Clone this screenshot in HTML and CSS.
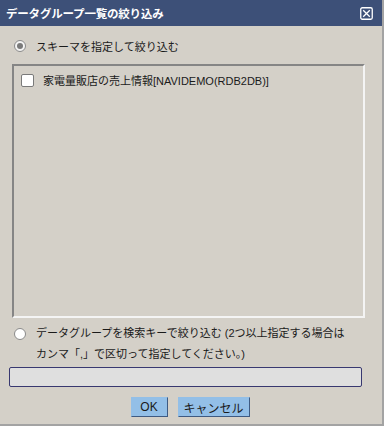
FILE: index.html
```html
<!DOCTYPE html>
<html lang="ja">
<head>
<meta charset="utf-8">
<link rel="stylesheet" href="styles.css">
</head>
<body>
<div class="dialog">
  <div class="titlebar">
    <span class="title">データグループ一覧の絞り込み</span>
    <svg class="close" width="13" height="13" viewBox="0 0 13 13">
      <rect x="0.75" y="0.75" width="11.5" height="11.5" rx="1.5" fill="none" stroke="#fff" stroke-width="1.3"/>
      <path d="M3.2 3.2 L9.8 9.8 M9.8 3.2 L3.2 9.8" stroke="#fff" stroke-width="1.3"/>
    </svg>
  </div>
  <div class="body">
    <label class="opt opt1"><span class="radio checked"></span><span>スキーマを指定して絞り込む</span></label>
    <div class="listbox">
      <label class="item"><span class="check"></span><span class="itemtext">家電量販店の売上情報[NAVIDEMO(RDB2DB)]</span></label>
    </div>
    <label class="opt opt2"><span class="radio"></span><span class="multi">データグループを検索キーで絞り込む (2つ以上指定する場合は<br>カンマ「,」で区切って指定してください。)</span></label>
    <div class="input"></div>
    <div class="buttons">
      <button class="btn ok">OK</button>
      <button class="btn cancel">キャンセル</button>
    </div>
  </div>
</div>
</body>
</html>
```
FILE: styles.css
```css
* { box-sizing: border-box; }
html, body { margin: 0; padding: 0; }
body {
  width: 384px; height: 426px;
  font-family: "Liberation Sans", "Noto Sans CJK JP", sans-serif;
  font-size: 11px;
  color: #1a1a1a;
  background: #d4d0c8;
}
.dialog {
  width: 384px; height: 426px;
  background: #d4d0c8;
  border-right: 2px solid #a3a3a3;
  border-bottom: 2px solid #a3a3a3;
  display: flex; flex-direction: column;
}
.titlebar {
  height: 26px; flex: none;
  background: #3d5078;
  display: flex; align-items: center; justify-content: space-between;
  padding: 0 9px 0 6px;
  color: #fff;
}
.title { font-weight: bold; font-size: 11.5px; letter-spacing: -0.2px; }
.close { display: block; }
.body {
  flex: 1;
  display: flex; flex-direction: column;
  padding: 8px 0 0 0;
}
.opt { display: flex; align-items: flex-start; gap: 10px; }
.opt1 { padding-left: 14px; height: 24px; align-items: center; }
.radio {
  width: 12px; height: 12px; border-radius: 50%;
  background: #fff; border: 1px solid #8a8a8a;
  flex: none; position: relative;
}
.radio.checked { background: #f4f4f4; }
.radio.checked::after {
  content: ""; position: absolute; left: 2px; top: 2px;
  width: 6px; height: 6px; border-radius: 50%; background: #7a7a7a;
}
.listbox {
  flex: none;
  margin: 6px 17px 0 12px;
  height: 254px;
  border-top: 2px solid #858585;
  border-left: 2px solid #858585;
  border-right: 2px solid #f4f4f4;
  border-bottom: 2px solid #f4f4f4;
  padding: 6px 0 0 7px;
}
.item { display: flex; align-items: center; gap: 9px; }
.check {
  width: 13px; height: 13px; border-radius: 2px;
  background: #fff; border: 1px solid #7a7a7a; flex: none;
}
.opt2 { padding-left: 14px; margin-top: 9px; }
.opt2 .radio { margin-top: 1px; }
.multi { line-height: 21px; margin-top: -4px; }
.input {
  flex: none;
  margin: 2px 20px 0 9px;
  height: 20px;
  background: #dfdfdf;
  border: 1px solid #383870;
  border-radius: 2px;
}
.buttons { display: flex; justify-content: center; gap: 10px; margin-top: 10px; padding-right: 2px; }
.btn {
  font-family: "Liberation Sans", "Noto Sans CJK JP", sans-serif;
  font-size: 12px; color: #1a1a1a;
  background: #93bfe7;
  border: 1px solid #93bfe7;
  border-right-color: #3e5a82;
  border-bottom-color: #3e5a82;
  height: 20px; padding: 0; margin: 0;
  white-space: nowrap;
}
.ok { width: 37px; }
.cancel { width: 72px; }
```
